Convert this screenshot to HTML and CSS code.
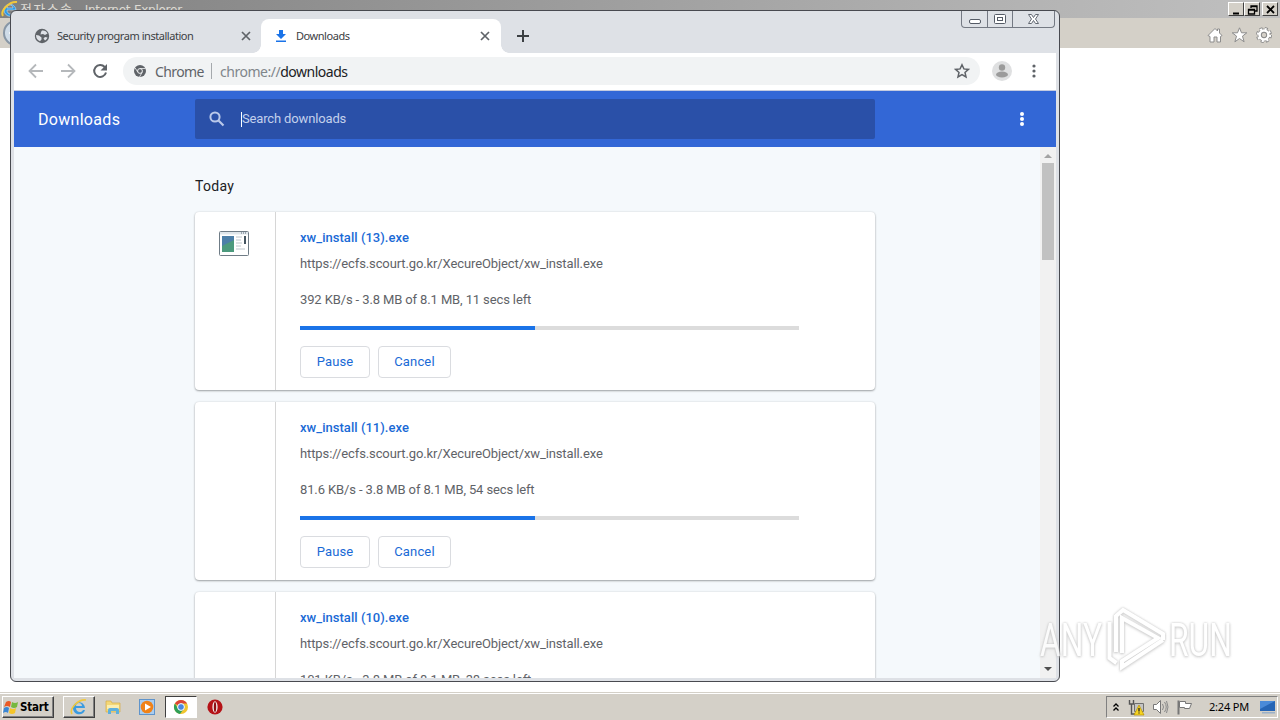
FILE: index.html
```html
<!DOCTYPE html>
<html lang="en">
<head>
  <meta charset="UTF-8">
  <title>Downloads</title>
  <link rel="stylesheet" href="styles.css">
</head>
<body>
  <div class="desktop">
    <div class="ie-title">
      <svg class="ie-logo" width="18" height="18" viewBox="0 0 18 18"><path d="M15 10H6c0 5 6 5 7 2h2c-2 7-12 5-12-2s11-8 12 0zM6 8h6c0-4-6-4-6 0z" fill="#2d9be8" stroke="#d8eefb" stroke-width=".5"/><path d="M2 16C-1 11 8 1 16 2" fill="none" stroke="#f1c83c" stroke-width="2"/></svg>
      <span class="ie-name"><span class="ko">전자소송</span> - Internet Explorer</span>
      <div class="ie-buttons">
        <svg width="16" height="14"><path d="M4 10.500h6" stroke="#000" stroke-width="2"/></svg>
        <svg width="16" height="14"><path d="M6 5V3h6v5h-2M6 3.500h6M3.500 6.500h6v4.500h-6zM3 7h7" fill="none" stroke="#000" stroke-width="1.300"/></svg>
        <svg class="ie-x" width="16" height="14"><path d="M4 3l7 7M11 3l-7 7" stroke="#000" stroke-width="1.800"/></svg>
      </div>
    </div>
    <div class="ie-bar">
      <svg class="ie-back" width="28" height="28"><circle cx="14" cy="14" r="12" fill="#cfdce8" stroke="#8796a5" stroke-width="2"/><path d="M17 7l-8 7 8 7" fill="none" stroke="#fff" stroke-width="3"/></svg>
      <div class="ie-tools">
        <svg width="16" height="16" viewBox="0 0 16 16"><path d="M1 8.500L8 1.500l2.500 2.500V2h2v4L15 8.500l-1.500 1V15H10v-5H7v5H3V9.500z" fill="#fff" stroke="#8c8c8c"/></svg>
        <svg width="17" height="16" viewBox="0 0 17 16"><path d="M8.500.8l2 5h5.300l-4.300 3.300 1.600 5.700-4.600-3.300-4.600 3.300 1.600-5.700L1.200 5.800h5.300z" fill="#fff" stroke="#8c8c8c"/></svg>
        <svg width="16" height="16" viewBox="0 0 16 16"><circle cx="8" cy="8" r="6.300" fill="none" stroke="#8c8c8c" stroke-width="3.400" stroke-dasharray="2.800 2.150"/><circle cx="8" cy="8" r="4.500" fill="none" stroke="#8c8c8c" stroke-width="4"/><circle cx="8" cy="8" r="6" fill="none" stroke="#fff" stroke-width="2.200" stroke-dasharray="2 2.710"/><circle cx="8" cy="8" r="4.400" fill="none" stroke="#fff" stroke-width="2.500"/><circle cx="8" cy="8" r="2.700" fill="#d4d0c8" stroke="#8c8c8c"/></svg>
      </div>
    </div>

    <div class="window">
      <div class="caption">
        <span><svg width="25" height="16"><rect x="7.500" y="8.500" width="11" height="4" rx="1.500" fill="#fff" stroke="#555b66"/></svg></span>
        <span><svg width="24" height="16"><rect x="6.500" y="3.500" width="11" height="9" rx="1" fill="#fff" stroke="#555b66"/><rect x="9.500" y="6.500" width="5" height="3" fill="#fff" stroke="#555b66"/></svg></span>
        <span><svg width="41" height="16"><path d="M15.500 3.500h3l2 3 2-3h3L22.500 8l3 4.500h-3l-2-3-2 3h-3l3-4.500z" fill="#fff" stroke="#626872"/></svg></span>
      </div>
      <div class="tabs">
        <div class="tab first">
          <svg width="16" height="16" viewBox="0 0 16 16"><circle cx="8" cy="8" r="7.200" fill="#5f6368"/><path d="M2 7l3 .5 2.500 2v2L6 13.200C3.500 12.500 2 10 2 7zM8 2.500c2.500-.5 4.500.8 5.500 3L11 7 9 6 6.500 6.500 7 4zM11 9l2.500.5c-.6 1.400-1.300 2.200-2.500 3L9.500 10.500z" fill="#dee1e6"/></svg>
          <span class="tab-text">Security program installation</span>
          <svg class="close" width="10" height="10"><path d="M1 1l8 8M9 1L1 9" stroke="#5f6368" stroke-width="1.700"/></svg>
        </div>
        <div class="tab active">
          <svg width="16" height="16" viewBox="0 0 16 16"><path d="M6 2h4v4h3L8 11 3 6h3zM3 12.500h10V14H3z" fill="#1a73e8"/></svg>
          <span class="tab-text">Downloads</span>
          <svg class="close" width="10" height="10"><path d="M1 1l8 8M9 1L1 9" stroke="#5f6368" stroke-width="1.700"/></svg>
        </div>
        <svg class="plus" width="12" height="12"><path d="M6 0v12M0 6h12" stroke="#3c4043" stroke-width="2"/></svg>
      </div>
      <div class="toolbar">
        <svg class="back" width="16" height="16"><path d="M15 8H2M8 1.500L1.500 8 8 14.500" fill="none" stroke="#b5b8bb" stroke-width="1.800"/></svg>
        <svg class="forward" width="16" height="16"><path d="M1 8h13M8 1.500L14.500 8 8 14.500" fill="none" stroke="#b5b8bb" stroke-width="1.800"/></svg>
        <svg class="reload" width="16" height="16"><path d="M12.700 4A6 6 0 1 0 14 9.500" fill="none" stroke="#5f6368" stroke-width="2"/><path d="M15 1v6.500H8.500z" fill="#5f6368"/></svg>
        <div class="omnibox">
          <svg width="12" height="12" viewBox="0 0 12 12"><circle cx="6" cy="6" r="6" fill="#5f6368"/><circle cx="6" cy="6" r="2.400" fill="#5f6368" stroke="#f1f3f4"/><path d="M6 3.500h5.500M3.800 7.200L1.200 3M8.200 7.200L5.500 12" stroke="#f1f3f4" stroke-width=".8"/></svg>
          <span class="scheme">Chrome</span>
          <span class="sep"></span>
          <span class="url">chrome://<b>downloads</b></span>
          <svg class="star" width="16" height="16" viewBox="0 0 16 16"><path d="M8 1.800l1.900 4.100 4.500.5L11 9.400l1 4.500-4-2.400-4 2.400 1-4.500-3.400-3 4.500-.5z" fill="none" stroke="#5f6368" stroke-width="1.500"/></svg>
        </div>
        <svg class="avatar" width="20" height="20"><circle cx="10" cy="10" r="10" fill="#dfe0e1"/><circle cx="10" cy="6.500" r="3.200" fill="#9b9b9b"/><ellipse cx="10" cy="13.500" rx="6" ry="3" fill="#9b9b9b"/></svg>
        <svg class="dots" width="4" height="14"><g fill="#5f6368"><circle cx="2" cy="2" r="1.600"/><circle cx="2" cy="7" r="1.600"/><circle cx="2" cy="12" r="1.600"/></g></svg>
      </div>
      <div class="header">
        <h1>Downloads</h1>
        <div class="search">
          <svg width="16" height="16"><circle cx="6" cy="6" r="4.600" fill="none" stroke="#b9c8ea" stroke-width="2"/><path d="M9.500 9.500l5 5" stroke="#b9c8ea" stroke-width="2.200"/></svg>
          <span class="caret"></span><span class="placeholder">Search downloads</span>
        </div>
        <svg class="menu" width="4" height="14"><g fill="#fff"><circle cx="2" cy="2" r="2"/><circle cx="2" cy="7" r="2"/><circle cx="2" cy="12" r="2"/></g></svg>
      </div>
      <div class="page">
        <div class="list">
          <h2>Today</h2>
          <div class="card">
            <div class="icon">
              <svg width="32" height="28"><rect x="1.500" y="2.500" width="29" height="24" rx="1" fill="#fff" stroke="#6f7c86"/><path d="M2 3h28v2.500H2z" fill="#dfe6eb"/><path d="M23 4h6" stroke="#5d6b78" stroke-dasharray="1 1"/><rect x="4" y="7" width="12" height="16" fill="#4c9a7d"/><path d="M4 7h12v4L4 17z" fill="#4c7fa8"/><path d="M18 8h6M18 11h5M18 14h6M18 17h5M18 20h9" stroke="#bcc4ca"/><path d="M27 7v8" stroke="#455560" stroke-width="2"/></svg>
            </div>
            <div class="details">
              <div class="name">xw_install (13).exe</div>
              <div class="link">https://ecfs.scourt.go.kr/XecureObject/xw_install.exe</div>
              <div class="status">392 KB/s - 3.8 MB of 8.1 MB, 11 secs left</div>
              <div class="progress"><div style="width: 47%"></div></div>
              <div class="actions"><button class="pause">Pause</button><button class="cancel">Cancel</button></div>
            </div>
          </div>
          <div class="card">
            <div class="icon"></div>
            <div class="details">
              <div class="name">xw_install (11).exe</div>
              <div class="link">https://ecfs.scourt.go.kr/XecureObject/xw_install.exe</div>
              <div class="status">81.6 KB/s - 3.8 MB of 8.1 MB, 54 secs left</div>
              <div class="progress"><div style="width: 47%"></div></div>
              <div class="actions"><button class="pause">Pause</button><button class="cancel">Cancel</button></div>
            </div>
          </div>
          <div class="card">
            <div class="icon"></div>
            <div class="details">
              <div class="name">xw_install (10).exe</div>
              <div class="link">https://ecfs.scourt.go.kr/XecureObject/xw_install.exe</div>
              <div class="status">101 KB/s - 3.8 MB of 8.1 MB, 38 secs left</div>
            </div>
          </div>
        </div>
        <div class="scrollbar">
          <svg width="16" height="16"><path d="M4 11l4-4 4 4z" fill="#a3a3a3"/></svg>
          <div class="thumb"></div>
          <svg class="down" width="16" height="16"><path d="M4 5l4 4 4-4z" fill="#505050"/></svg>
        </div>
      </div>
    </div>

    <svg class="watermark" width="208" height="70">
      <g font-family="Roboto, sans-serif" font-size="46" font-weight="400">
        <text x="3" y="50" textLength="62" lengthAdjust="spacingAndGlyphs">ANY</text>
        <text x="132" y="50" textLength="63" lengthAdjust="spacingAndGlyphs">RUN</text>
      </g>
      <path d="M72.500 16v36l7 5M79 46V9M85 47V12l36 20-36 23v6l41-27M79 10l7-6 40 24v6" fill="none" stroke="#fff" stroke-width="4"/>
    </svg>

    <div class="taskbar">
      <div class="start">
        <svg width="17" height="17" viewBox="0 0 17 17"><path d="M3 3q3-2 5 0L7 8Q4 6 1 8z" fill="#ea5a26"/><path d="M9 3q3 2 6 0l-1 5q-3 2-6 0z" fill="#76b83f"/><path d="M1 9q3-2 5 0l-1 5q-2-2-5 0z" fill="#3a86d4"/><path d="M7 9q3 2 6 0l-1 5q-3 2-6 0z" fill="#f5c529"/></svg>
        <span>Start</span>
      </div>
      <div class="task raised"><svg width="18" height="18" viewBox="0 0 18 18"><path d="M15 10H6c0 5 6 5 7 2h2c-2 7-12 5-12-2s11-8 12 0zM6 8h6c0-4-6-4-6 0z" fill="#3b9be0"/><path d="M2 16C-1 11 8 1 16 2" fill="none" stroke="#f1c83c" stroke-width="1.600"/></svg></div>
      <div class="task"><svg width="18" height="18"><path d="M2 3h5l1 2h8v9H2z" fill="#f3d778" stroke="#d6ae45" stroke-width=".7"/><path d="M3 7h12v4H3z" fill="#fbeeb0"/><path d="M4 16v-4q0-2 2-2h7q2 0 2 2v4h-3v-3H7v3z" fill="#5fb0dc"/></svg></div>
      <div class="task"><svg width="18" height="18"><rect x="1.500" y="1.500" width="15" height="15" fill="#a9cdf0" stroke="#5f94cb"/><circle cx="9" cy="9" r="6.300" fill="#f08218"/><path d="M7 5.500l6 3.500-6 3.500z" fill="#fff"/></svg></div>
      <div class="task pressed"><svg width="16" height="16" viewBox="0 0 16 16"><circle cx="8" cy="8" r="7" fill="#f0c52f"/><path d="M8 8L1.900 4.500A7 7 0 0 1 14.100 4.500H8z" fill="#dc4437"/><path d="M1.900 4.500A7 7 0 0 0 7 15l4-5.500H5z" fill="#2f9f57"/><circle cx="8" cy="8" r="3.400" fill="#4a87e0" stroke="#fff"/></svg></div>
      <div class="task"><svg width="16" height="16"><circle cx="8" cy="8" r="7.600" fill="#b51217"/><ellipse cx="8" cy="8" rx="2.600" ry="5.800" fill="#f4eeee"/><ellipse cx="8" cy="8" rx="1.200" ry="5" fill="#8e0e12"/></svg></div>
      <div class="tray">
        <svg class="up" width="8" height="10"><path d="M1.500 4.500L4 2l2.500 2.500M1.500 8.500L4 6l2.500 2.500" fill="none" stroke="#000" stroke-width="1.300"/></svg>
        <svg class="net" width="17" height="17"><path d="M6.500 4.500h9v8h-9z" fill="#c4c4c4" stroke="#707070"/><path d="M1.500 1v4h4V1M3.500 5v10h4" fill="none" stroke="#555" stroke-width="1.400"/><path d="M11 6l5 10H6z" fill="#f6d321" stroke="#b49000" stroke-width=".7"/><path d="M11 9v3.500M11 13.500v1" stroke="#222" stroke-width="1.300"/></svg>
        <svg class="sound" width="17" height="16"><path d="M1.500 5.500h3l4-4v13l-4-4h-3z" fill="#fff" stroke="#777"/><path d="M10.500 5q2 3 0 6M12.500 3q3.500 5 0 10M14.500 2q3 6 0 12" fill="none" stroke="#888"/></svg>
        <svg class="flag" width="17" height="16"><path d="M2.500 1.500v14" stroke="#777" stroke-width="2"/><path d="M3.500 2.500h6v2h6l-2 5h-5v-1h-5z" fill="#fff" stroke="#777"/></svg>
        <span class="clock">2:24 PM</span>
        <svg class="show" width="16" height="14"><rect x="1" y="1" width="15" height="10" fill="#2665b5"/><path d="M1 1h15L1 9z" fill="#4a8ad8"/><path d="M3 12h13v1.500H3z" fill="#9ab0c8"/></svg>
      </div>
    </div>
  </div>
</body>
</html>
```
FILE: styles.css
```css
* {
  box-sizing: border-box;
}
body {
  margin: 0;
  font-family: "Noto Sans", "Noto Sans CJK KR", sans-serif;
}
svg {
  display: block;
  flex: none;
}
.desktop {
  position: relative;
  width: 1280px;
  height: 720px;
  overflow: hidden;
  background: #fff;
  display: flex;
  flex-direction: column;
}
.ie-title {
  display: flex;
  height: 18px;
  background: linear-gradient(90deg, #808080, #c0c0c0);
  color: #dedbd4;
  white-space: nowrap;
}
.ie-logo {
  margin-left: 1px;
}
.ie-name {
  margin-left: 1px;
  font: 12px/19px "DejaVu Sans", "Noto Sans CJK KR", sans-serif;
  letter-spacing: -0.25px;
}
.ko {
  font-size: 13px;
  letter-spacing: 1.4px;
}
.ie-buttons {
  display: flex;
  margin: 2px 2px 0 auto;
}
.ie-buttons svg {
  background: #d4d0c8;
  border: 1px solid;
  border-color: #fff #404040 #404040 #fff;
}
.ie-buttons .ie-x {
  margin-left: 2px;
}
.ie-bar {
  display: flex;
  height: 30px;
  background: #d4d0c8;
}
.ie-back {
  margin: 1px 0 0 2px;
}
.ie-tools {
  display: flex;
  gap: 8px;
  margin: 9px 8px 0 auto;
}

/* browser window */
.window {
  position: absolute;
  left: 10px;
  top: 10px;
  width: 1050px;
  height: 672px;
  padding: 1px 3px 3px;
  border: 1px solid #484a50;
  border-radius: 6px;
  background: #dee1e6;
  display: flex;
  flex-direction: column;
}
.caption {
  position: absolute;
  right: 4px;
  top: 0;
  display: flex;
  height: 17px;
  border: 1px solid #747983;
  border-top: 0;
  border-radius: 0 0 4px 4px;
}
.caption span + span {
  border-left: 1px solid #747983;
}
.tabs {
  display: flex;
  height: 41px;
  padding-top: 7px;
}
.tab {
  display: flex;
  align-items: center;
  height: 34px;
  font-size: 11px;
  color: #3c4043;
}
.tab.first {
  width: 247px;
  padding: 0 10px 0 20px;
}
.tab.active {
  position: relative;
  width: 240px;
  padding: 0 11px 0 12px;
  background: #fff;
  border-radius: 8px 8px 0 0;
}
.tab.active::before,
.tab.active::after {
  content: "";
  position: absolute;
  bottom: 0;
  width: 8px;
  height: 8px;
}
.tab.active::before {
  left: -8px;
  background: radial-gradient(circle at 0 0, transparent 7.5px, #fff 8px);
}
.tab.active::after {
  right: -8px;
  background: radial-gradient(circle at 100% 0, transparent 7.5px, #fff 8px);
}
.tab-text {
  margin-left: 7px;
  padding-bottom: 2px;
  letter-spacing: -0.45px;
  white-space: nowrap;
}
.tab .close {
  margin-left: auto;
}
.plus {
  margin: 11px 0 0 16px;
}
.toolbar {
  display: flex;
  align-items: center;
  height: 38px;
  padding: 0 0 1px 14px;
  background: #fff;
  border-bottom: 1px solid #c5cbe0;
}
.forward,
.reload {
  margin-left: 16px;
}
.omnibox {
  display: flex;
  align-items: center;
  width: 857px;
  height: 28px;
  margin-left: 15px;
  padding: 0 10px 0 11px;
  border-radius: 14px;
  background: #f1f3f4;
  color: #5f6368;
  font-size: 14px;
}
.scheme {
  width: 49px;
  margin-left: 9px;
  letter-spacing: -0.6px;
}
.sep {
  width: 1px;
  height: 16px;
  margin: 0 8px 0 7px;
  background: #a5a9ad;
}
.url {
  color: #80868b;
  letter-spacing: -0.48px;
}
.url b {
  font-weight: normal;
  color: #202124;
}
.star {
  margin-left: auto;
}
.avatar {
  margin-left: 12px;
}
.dots {
  margin-left: 20px;
}
.header {
  display: flex;
  align-items: center;
  height: 56px;
  padding-left: 24px;
  background: #3367d6;
  color: #fff;
  font-family: Roboto, sans-serif;
}
.header h1 {
  width: 157px;
  margin: 0;
  font-size: 16px;
  font-weight: 400;
  letter-spacing: 0.3px;
}
.search {
  display: flex;
  align-items: center;
  width: 680px;
  height: 40px;
  padding-left: 14px;
  border-radius: 2px;
  background: #2a50a8;
  color: #c3d0ec;
  font-size: 13px;
}
.caret {
  width: 1px;
  height: 15px;
  margin-left: 16px;
  background: #fff;
}
.placeholder {
  padding-bottom: 2px;
  letter-spacing: -0.15px;
}
.menu {
  margin-left: 145px;
}
.page {
  display: flex;
  flex: 1;
  min-height: 0;
  overflow: hidden;
  background: #f5f9fc;
  font-family: Roboto, sans-serif;
  font-size: 13px;
  line-height: 20px;
  color: #5f6368;
}
.list {
  width: 680px;
  margin-left: 181px;
}
.list h2 {
  margin: 29px 0 16px;
  font-size: 14px;
  font-weight: 400;
  line-height: 20px;
  letter-spacing: 0.3px;
  color: #202124;
}
.card {
  display: flex;
  height: 178px;
  margin-bottom: 12px;
  border-radius: 4px;
  background: #fff;
  box-shadow: 0 1px 2px rgba(60, 64, 67, 0.45), 0 0 2px rgba(60, 64, 67, 0.15);
}
.icon {
  width: 81px;
  padding: 17px 0 0 23px;
  border-right: 1px solid #d6d6d6;
}
.details {
  width: 523px;
  padding: 16px 0 0 24px;
  white-space: nowrap;
}
.name {
  font-weight: 500;
  color: #1a6ad6;
  letter-spacing: 0.04px;
}
.link {
  margin-top: 6px;
  letter-spacing: -0.11px;
}
.status {
  margin-top: 16px;
  letter-spacing: -0.12px;
}
.progress {
  height: 4px;
  margin: 16px 0;
  background: #dcdcdc;
}
.progress div {
  height: 4px;
  background: #1a73e8;
}
.actions {
  display: flex;
  gap: 8px;
}
.actions button {
  height: 32px;
  padding: 0 0 2px;
  border: 1px solid #dadce0;
  border-radius: 4px;
  background: #fff;
  color: #1a6ad6;
  font: 400 13px Roboto, sans-serif;
  letter-spacing: 0.15px;
}
.actions .pause {
  width: 70px;
}
.actions .cancel {
  width: 73px;
}
.scrollbar {
  display: flex;
  flex-direction: column;
  width: 16px;
  margin-left: auto;
  background: #f1f1f1;
}
.thumb {
  width: 12px;
  height: 97px;
  margin-left: 2px;
  background: #c1c1c1;
}
.down {
  margin-top: auto;
}

.watermark {
  position: absolute;
  left: 1037px;
  top: 606px;
  fill: #fff;
  opacity: 0.75;
  filter: drop-shadow(0 0 1px #bbb) drop-shadow(0 1px 1px #ccc);
}

/* taskbar */
.taskbar {
  display: flex;
  height: 28px;
  margin-top: auto;
  padding: 3px 2px 1px;
  background: #d4d0c8;
  border-top: 1px solid #d4d0c8;
  box-shadow: inset 0 1px #fff;
}
.start,
.raised {
  border: 1px solid;
  border-color: #fff #404040 #404040 #fff;
  box-shadow: inset -1px -1px #808080;
}
.start {
  display: flex;
  align-items: center;
  width: 52px;
  height: 22px;
  margin-right: 9px;
  font: bold 11.5px "DejaVu Sans Condensed", sans-serif;
  letter-spacing: -0.2px;
}
.task {
  display: flex;
  align-items: center;
  justify-content: center;
  width: 32px;
  height: 22px;
  margin-right: 2px;
}
.pressed {
  background: #fff;
  border: 1px solid;
  border-color: #404040 #fff #fff #404040;
}
.tray {
  display: flex;
  align-items: center;
  width: 172px;
  height: 22px;
  margin-left: auto;
  border: 1px solid;
  border-color: #808080 #fff #fff #808080;
  font-size: 11px;
  color: #000;
}
.up {
  margin-left: 5px;
}
.net {
  margin-left: 8px;
}
.sound,
.flag {
  margin-left: 7px;
}
.clock {
  width: 41px;
  margin-left: 16px;
  padding-bottom: 2px;
  letter-spacing: -0.2px;
  white-space: nowrap;
}
.show {
  margin-left: 9px;
}
```
